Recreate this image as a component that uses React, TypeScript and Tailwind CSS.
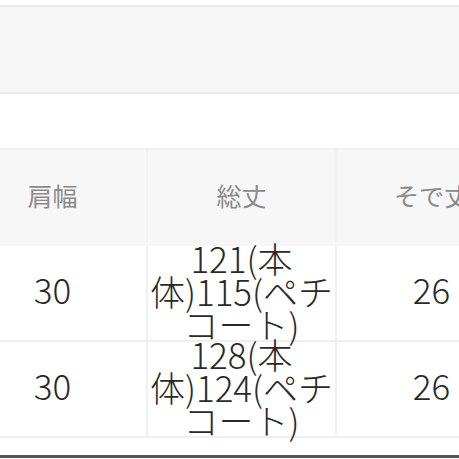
const rows = [
  { shoulder: "30", length: ["121(本", "体)115(ペチ", "コート)"], sleeve: "26" },
  { shoulder: "30", length: ["128(本", "体)124(ペチ", "コート)"], sleeve: "26" },
];

export default function App() {
  return (
    <div
      className="h-[459px] w-[459px] overflow-hidden bg-white"
      style={{ fontFamily: '"Noto Sans CJK JP", "Noto Sans", sans-serif' }}
    >
      <div className="h-[5px]" />
      <div className="h-[89px] border-y-2 border-t-[#ececec] border-b-[#ebebeb] bg-[#f7f7f7]" />
      <div className="h-[54px]" />

      {/* table is scrolled sideways: first column starts off-screen */}
      <div className="-ml-[41px] w-[600px] border-t-2 border-[#efefef]">
        <div className="flex h-[96px] bg-[#f7f7f7] pb-[4px] text-[25px] text-[#8a8a8a]">
          <div className="flex w-[189px] items-center justify-center border-r-2 border-[#f2f2f2]">肩幅</div>
          <div className="flex w-[189px] items-center justify-center border-r-2 border-[#f2f2f2]">総丈</div>
          <div className="flex w-[189px] items-center justify-center whitespace-nowrap">そで丈</div>
        </div>
        {rows.map((r, i) => (
          <div key={i} className="flex h-[96px] border-b-2 border-[#efefef] font-light text-[#2a2a2a]">
            <div className="flex w-[189px] items-center justify-center border-r-2 border-[#f0f0f0] pb-[8px] text-[35px]">
              {r.shoulder}
            </div>
            <div className="flex w-[189px] flex-col items-center justify-center border-r-2 border-[#f0f0f0] pb-[6px] text-[35px] leading-[33px]">
              {r.length.map((l, j) => (
                <span key={j} className="whitespace-nowrap">{l}</span>
              ))}
            </div>
            <div className="flex w-[189px] items-center justify-center pb-[8px] text-[35px]">{r.sleeve}</div>
          </div>
        ))}
      </div>

      <div className="h-[17px]" />
      <div className="h-[3px] bg-[#555555]" />
    </div>
  );
}
